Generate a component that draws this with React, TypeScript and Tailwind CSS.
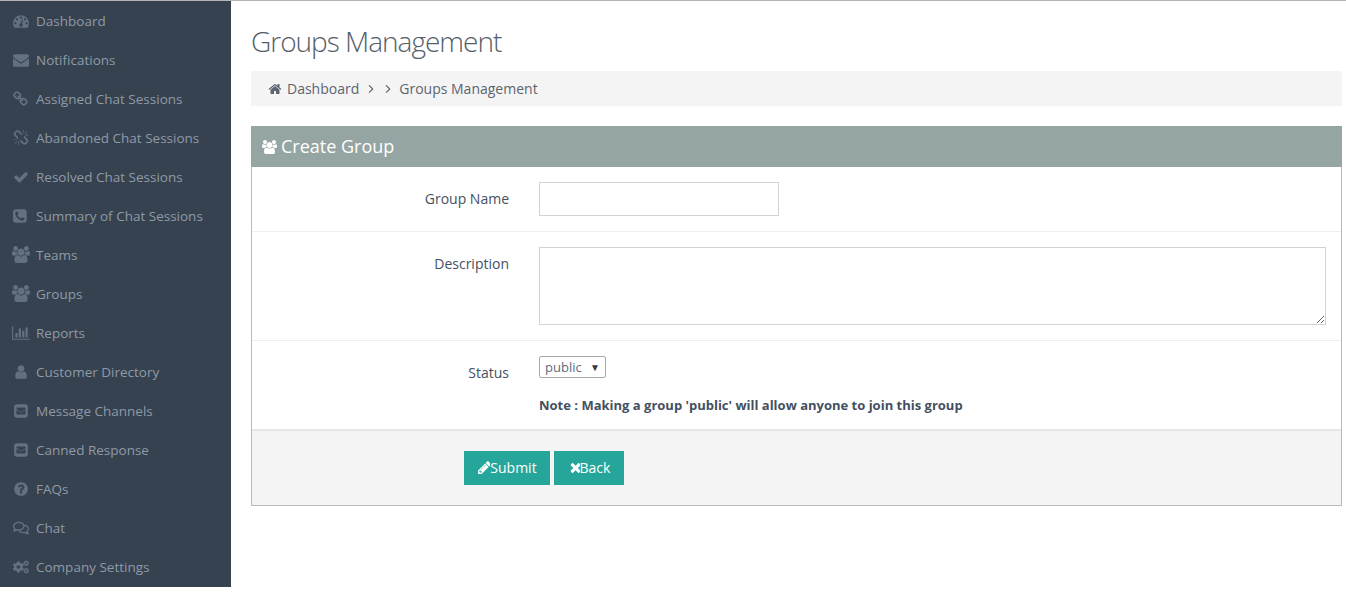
import type { ReactNode } from 'react'
import { FaCogs, FaRegComments } from 'react-icons/fa'
import { IoIosArrowForward } from 'react-icons/io'

// font awesome 4 glyphs, the react-icons set only has the newer drawings
const paths = {
  dashboard: 'M384 1152q0-53-37.5-90.5t-90.5-37.5-90.5 37.5-37.5 90.5 37.5 90.5 90.5 37.5 90.5-37.5 37.5-90.5zm192-448q0-53-37.5-90.5t-90.5-37.5-90.5 37.5-37.5 90.5 37.5 90.5 90.5 37.5 90.5-37.5 37.5-90.5zm428 481l101-382q6-26-7.5-48.5t-38.5-29.5-48 6.5-30 39.5l-101 382q-60 5-107 43.5t-63 98.5q-20 77 20 146t117 89 146-20 89-117q16-60-6-117t-72-91zm660-33q0-53-37.5-90.5t-90.5-37.5-90.5 37.5-37.5 90.5 37.5 90.5 90.5 37.5 90.5-37.5 37.5-90.5zm-640-640q0-53-37.5-90.5t-90.5-37.5-90.5 37.5-37.5 90.5 37.5 90.5 90.5 37.5 90.5-37.5 37.5-90.5zm448 192q0-53-37.5-90.5t-90.5-37.5-90.5 37.5-37.5 90.5 37.5 90.5 90.5 37.5 90.5-37.5 37.5-90.5zm320 448q0 261-141 483-19 29-54 29h-1402q-35 0-54-29-141-221-141-483 0-182 71-348t191-286 286-191 348-71 348 71 286 191 191 286 71 348z',
  envelope: 'M1792 710v794q0 66-47 113t-113 47h-1472q-66 0-113-47t-47-113v-794q44 49 101 87 362 246 497 345 57 42 92.5 65.5t94.5 48 110 24.5h2q51 0 110-24.5t94.5-48 92.5-65.5q170-123 498-345 57-39 100-87zm0-294q0 79-49 151t-122 123q-376 261-468 325-10 7-42.5 30.5t-54 38-52 32.5-57.5 27-50 9h-2q-23 0-50-9t-57.5-27-52-32.5-54-38-42.5-30.5q-91-64-262-182.5t-205-142.5q-62-42-117-115.5t-55-136.5q0-78 41.5-130t118.5-52h1472q65 0 112.5 47t47.5 113z',
  link: 'M1456 1216q0-40-28-68l-208-208q-28-28-68-28-42 0-72 32 3 3 19 18.5t21.5 21.5 15 19 13 25.5 3.5 27.5q0 40-28 68t-68 28q-15 0-27.5-3.5t-25.5-13-19-15-21.5-21.5-18.5-19q-33 31-33 73 0 40 28 68l206 207q27 27 68 27 40 0 68-26l147-146q28-28 28-67zm-703-705q0-40-28-68l-206-207q-28-28-68-28-39 0-68 27l-147 146q-28 28-28 67 0 40 28 68l208 208q27 27 68 27 42 0 72-31-3-3-19-18.5t-21.5-21.5-15-19-13-25.5-3.5-27.5q0-40 28-68t68-28q15 0 27.5 3.5t25.5 13 19 15 21.5 21.5 18.5 19q33-31 33-73zm895 705q0 120-85 203l-147 146q-83 83-203 83-121 0-204-85l-206-207q-83-83-83-203 0-123 88-209l-88-88q-86 88-208 88-120 0-204-84l-208-208q-84-84-84-204t85-203l147-146q83-83 203-83 121 0 204 85l206 207q83 83 83 203 0 123-88 209l88 88q86-88 208-88 120 0 204 84l208 208q84 84 84 204z',
  unlink: 'M503 1271l-256 256q-10 9-23 9-12 0-23-9-9-10-9-23t9-23l256-256q10-9 23-9t23 9q9 10 9 23t-9 23zm169 41v320q0 14-9 23t-23 9-23-9-9-23v-320q0-14 9-23t23-9 23 9 9 23zm-224-224q0 14-9 23t-23 9h-320q-14 0-23-9t-9-23 9-23 23-9h320q14 0 23 9t9 23zm1264 128q0 120-85 203l-147 146q-83 83-203 83-121 0-204-85l-334-335q-21-21-42-56l239-18 273 274q27 27 68 27.5t68-26.5l147-146q28-28 28-67 0-40-28-68l-274-275 18-239q35 21 56 42l336 336q84 86 84 204zm-617-724l-239 18-273-274q-28-28-68-28-39 0-68 27l-147 146q-28 28-28 67 0 40 28 68l274 274-18 240q-35-21-56-42l-336-336q-84-86-84-204 0-120 85-203l147-146q83-83 203-83 121 0 204 85l334 335q21 21 42 56zm633 84q0 14-9 23t-23 9h-320q-14 0-23-9t-9-23 9-23 23-9h320q14 0 23 9t9 23zm-544-544v320q0 14-9 23t-23 9-23-9-9-23v-320q0-14 9-23t23-9 23 9 9 23zm407 151l-256 256q-11 9-23 9t-23-9q-9-10-9-23t9-23l256-256q10-9 23-9t23 9q9 10 9 23t-9 23z',
  check: 'M1671 566q0 40-28 68l-724 724-136 136q-28 28-68 28t-68-28l-136-136-362-362q-28-28-28-68t28-68l136-136q28-28 68-28t68 28l294 295 656-657q28-28 68-28t68 28l136 136q28 28 28 68z',
  phone: 'M1280 1193q0-11-2-16t-18-16.5-40.5-25-47.5-26.5-45.5-25-28.5-15q-5-3-19-13t-25-15-21-5q-15 0-36.5 20.5t-39.5 45-38.5 45-33.5 20.5q-7 0-16.5-3.5t-15.5-6.5-17-9.5-14-8.5q-99-55-170-126.5t-127-170.5q-2-3-8.5-14t-9.5-17-6.5-15.5-3.5-16.5q0-13 20.5-33.5t45-38.5 45-39.5 20.5-36.5q0-10-5-21t-15-25-13-19q-3-6-15-28.5t-25-45.5-26.5-47.5-25-40.5-16.5-18-16-2q-48 0-101 22-46 21-80 94.5t-34 130.5q0 16 2.5 34t5 30.5 9 33 10 29.5 12.5 33 11 30q60 164 216.5 320.5t320.5 216.5q6 2 30 11t33 12.5 29.5 10 33 9 30.5 5 34 2.5q57 0 130.5-34t94.5-80q22-53 22-101zm256-777v960q0 119-84.5 203.5t-203.5 84.5h-960q-119 0-203.5-84.5t-84.5-203.5v-960q0-119 84.5-203.5t203.5-84.5h960q119 0 203.5 84.5t84.5 203.5z',
  users: 'M529 896q-162 5-265 128h-134q-82 0-138-40.5t-56-118.5q0-353 124-353 6 0 43.5 21t97.5 42.5 119 21.5q67 0 133-23-5 37-5 66 0 139 81 256zm1071 637q0 120-73 189.5t-194 69.5h-874q-121 0-194-69.5t-73-189.5q0-53 3.5-103.5t14-109 26.5-108.5 43-97.5 62-81 85.5-53.5 111.5-20q10 0 43 21.5t73 48 107 48 135 21.5 135-21.5 107-48 73-48 43-21.5q61 0 111.5 20t85.5 53.5 62 81 43 97.5 26.5 108.5 14 109 3.5 103.5zm-1024-1277q0 106-75 181t-181 75-181-75-75-181 75-181 181-75 181 75 75 181zm704 384q0 159-112.5 271.5t-271.5 112.5-271.5-112.5-112.5-271.5 112.5-271.5 271.5-112.5 271.5 112.5 112.5 271.5zm576 225q0 78-56 118.5t-138 40.5h-134q-103-123-265-128 81-117 81-256 0-29-5-66 66 23 133 23 59 0 119-21.5t97.5-42.5 43.5-21q124 0 124 353zm-128-609q0 106-75 181t-181 75-181-75-75-181 75-181 181-75 181 75 75 181z',
  bars: 'M640 896v512h-256v-512h256zm384-512v1024h-256v-1024h256zm1024 1152v128h-2048v-1536h128v1408h1920zm-640-896v768h-256v-768h256zm384-384v1152h-256v-1152h256z',
  user: 'M1536 1399q0 109-62.5 187t-150.5 78h-854q-88 0-150.5-78t-62.5-187q0-85 8.5-160.5t31.5-152 58.5-131 94-89 134.5-34.5q131 128 313 128t313-128q76 0 134.5 34.5t94 89 58.5 131 31.5 152 8.5 160.5zm-256-887q0 159-112.5 271.5t-271.5 112.5-271.5-112.5-112.5-271.5 112.5-271.5 271.5-112.5 271.5 112.5 112.5 271.5z',
  envelopeSquare: 'M1376 128q119 0 203.5 84.5t84.5 203.5v960q0 119-84.5 203.5t-203.5 84.5h-960q-119 0-203.5-84.5t-84.5-203.5v-960q0-119 84.5-203.5t203.5-84.5h960zm32 1056v-436q-31 35-64 55-34 22-132.5 85t-151.5 99q-98 69-164 69t-164-69q-46-32-141.5-92.5t-142.5-92.5q-12-8-33-27t-31-27v436q0 40 28 68t68 28h832q40 0 68-28t28-68zm0-573q0-41-27.5-70t-68.5-29h-832q-40 0-68 26.5t-28 66.5q0 37 32 79.5t68 67.5q47 32 137 89t129 83q3 2 17 11.5t21 14 21 13 23.5 13 21.5 9.5 22.5 7.5 20.5 2.5 20.5-2.5 22.5-7.5 21.5-9.5 23.5-13 21-13 21-14 17-11.5l267-174q35-23 66.5-62.5t31.5-75.5z',
  question: 'M1024 1376v-192q0-14-9-23t-23-9h-192q-14 0-23 9t-9 23v192q0 14 9 23t23 9h192q14 0 23-9t9-23zm256-672q0-88-55.5-163t-138.5-116-170-41q-243 0-371 213-15 24 8 42l132 100q7 6 19 6 16 0 25-12 53-68 86-92 34-24 86-24 48 0 85.5 26t37.5 59q0 38-20 61t-68 45q-63 28-115.5 86.5t-52.5 125.5v36q0 14 9 23t23 9h192q14 0 23-9t9-23q0-19 21.5-49.5t54.5-49.5q32-18 49-28.5t46-35 44.5-48 28-60.5 12.5-81zm384 192q0 209-103 385.5t-279.5 279.5-385.5 103-385.5-103-279.5-279.5-103-385.5 103-385.5 279.5-279.5 385.5-103 385.5 103 279.5 279.5 103 385.5z',
  home: 'M1472 992v480q0 26-19 45t-45 19h-384v-384h-256v384h-384q-26 0-45-19t-19-45v-480q0-1 .5-3t.5-3l575-474 575 474q1 2 1 6zm223-69l-62 74q-8 9-21 11h-3q-13 0-21-7l-692-577-692 577q-12 8-24 7-13-2-21-11l-62-74q-8-10-7-23.5t11-21.5l719-599q32-26 76-26t76 26l244 204v-195q0-14 9-23t23-9h192q14 0 23 9t9 23v408l219 182q10 8 11 21.5t-7 23.5z',
  pencil: 'M491 1536l91-91-235-235-91 91v107h128v128h107zm523-928q0-22-22-22-10 0-17 7l-542 542q-7 7-7 17 0 22 22 22 10 0 17-7l542-542q7-7 7-17zm-54-192l416 416-832 832h-416v-416zm683 96q0 53-37 90l-166 166-416-416 166-165q36-38 90-38 53 0 91 38l235 234q37 39 37 91z',
  times: 'M1490 1322q0 40-28 68l-136 136q-28 28-68 28t-68-28l-294-294-294 294q-28 28-68 28t-68-28l-136-136q-28-28-28-68t28-68l294-294-294-294q-28-28-28-68t28-68l136-136q28-28 68-28t68 28l294 294 294-294q28-28 68-28t68 28l136 136q28 28 28 68t-28 68l-294 294 294 294q28 28 28 68z',
}

const Fa = ({ d, box = '0 0 1792 1792', className }: { d: string; box?: string; className: string }) => (
  <svg viewBox={box} className={className} fill="currentColor">
    <path d={d} />
  </svg>
)

const menu: { label: string; icon: ReactNode }[] = [
  { label: 'Dashboard', icon: <Fa d={paths.dashboard} className="w-4 h-4" /> },
  { label: 'Notifications', icon: <Fa d={paths.envelope} className="w-4 h-4" /> },
  { label: 'Assigned Chat Sessions', icon: <Fa d={paths.link} className="w-4 h-4" /> },
  { label: 'Abandoned Chat Sessions', icon: <Fa d={paths.unlink} className="w-4 h-4" /> },
  { label: 'Resolved Chat Sessions', icon: <Fa d={paths.check} className="w-4 h-4" /> },
  { label: 'Summary of Chat Sessions', icon: <Fa d={paths.phone} className="w-4 h-4" /> },
  { label: 'Teams', icon: <Fa d={paths.users} box="-64 0 1920 1792" className="w-[18px] h-[17px]" /> },
  { label: 'Groups', icon: <Fa d={paths.users} box="-64 0 1920 1792" className="w-[18px] h-[17px]" /> },
  { label: 'Reports', icon: <Fa d={paths.bars} box="0 0 2048 1792" className="w-[18px] h-4" /> },
  { label: 'Customer Directory', icon: <Fa d={paths.user} className="w-4 h-4" /> },
  { label: 'Message Channels', icon: <Fa d={paths.envelopeSquare} className="w-4 h-4" /> },
  { label: 'Canned Response', icon: <Fa d={paths.envelopeSquare} className="w-4 h-4" /> },
  { label: 'FAQs', icon: <Fa d={paths.question} className="w-4 h-4" /> },
  { label: 'Chat', icon: <FaRegComments className="w-4 h-4" /> },
  { label: 'Company Settings', icon: <FaCogs className="w-4 h-4" /> },
]

const App = () => {
  return (
    <div className="w-[1346px] h-[597px] bg-white border-t border-[#b5b5b5] flex items-start overflow-hidden font-['Open_Sans',sans-serif] text-[14px] text-[#44505f]">
      <aside className="w-[231px] h-[586px] shrink-0 bg-[#36424f]">
        {menu.map((item) => (
          <div key={item.label} className="h-[39px] flex items-center text-[13.5px] text-[#8f9aa8]">
            <span className="w-[36px] pl-[11px] shrink-0">
              <span className="w-5 flex items-center justify-center text-[#637080]">{item.icon}</span>
            </span>
            <span className="pt-px">{item.label}</span>
          </div>
        ))}
      </aside>

      <main className="flex-1 pl-5 pr-1">
        <h1 className="h-[70px] pt-[20px] text-[28px] leading-[40px] font-light tracking-[-1px] text-[#555e69]">Groups Management</h1>
        <div className="h-[35px] bg-[#f4f4f4] flex items-center pl-[17px] text-[#5b6470]">
          <Fa d={paths.home} className="w-[14px] h-[14px] mr-[5px]" />
          <span>Dashboard</span>
          <IoIosArrowForward className="w-3 h-3 ml-[6px]" />
          <IoIosArrowForward className="w-3 h-3 ml-[5px]" />
          <span className="ml-[5px]">Groups Management</span>
        </div>

        <section className="mt-5 border border-[#b3bcbc] border-t-0">
          <div className="-mx-px h-[41px] bg-[#95a5a3] flex items-center pl-[11px] text-white">
            <Fa d={paths.users} box="-64 0 1920 1792" className="w-[15px] h-[14px] mr-1" />
            <span className="text-[18px]">Create Group</span>
          </div>

          <div className="h-[65px] flex pt-[15px] border-b border-[#eeeeee]">
            <label className="w-[257px] text-right pt-[7px] leading-[20px]">Group Name</label>
            <input className="ml-[30px] w-[240px] h-[34px] border border-[#cfd4d8] bg-white" />
          </div>

          <div className="h-[109px] flex pt-[15px] border-b border-[#eeeeee]">
            <label className="w-[257px] text-right pt-[7px] leading-[20px]">Description</label>
            <textarea className="ml-[30px] w-[787px] h-[78px] border border-[#cfd4d8] bg-white" />
          </div>

          <div className="h-[90px] flex pt-[15px] border-b-2 border-[#e5e5e5]">
            <label className="w-[257px] text-right pt-[7px] leading-[20px]">Status</label>
            <div className="ml-[30px]">
              <div className="w-[67px] h-[22px] border border-[#a9a9a9] rounded-[2px] flex items-center justify-between pl-[5px] pr-[5px] pt-px text-[13px] text-[#5d6c7d]">
                <span>public</span>
                <span className="text-[10px] text-[#333a44] -mt-px">▼</span>
              </div>
              <p className="mt-[18px] text-[13px] leading-[18px] font-bold">Note : Making a group 'public' will allow anyone to join this group</p>
            </div>
          </div>

          <div className="h-[74px] bg-[#f4f4f4] flex items-start pt-[20px] pl-[212px] gap-1">
            <button className="h-[34px] w-[86px] pb-[2px] bg-[#26a69a] text-white flex items-center justify-center">
              <Fa d={paths.pencil} box="0 0 1536 1792" className="w-[13px] h-[15px]" />
              <span>Submit</span>
            </button>
            <button className="h-[34px] w-[70px] pb-[2px] bg-[#26a69a] text-white flex items-center justify-center">
              <Fa d={paths.times} box="0 0 1408 1792" className="w-[12px] h-[15px]" />
              <span>Back</span>
            </button>
          </div>
        </section>
      </main>
    </div>
  )
}

export default App
